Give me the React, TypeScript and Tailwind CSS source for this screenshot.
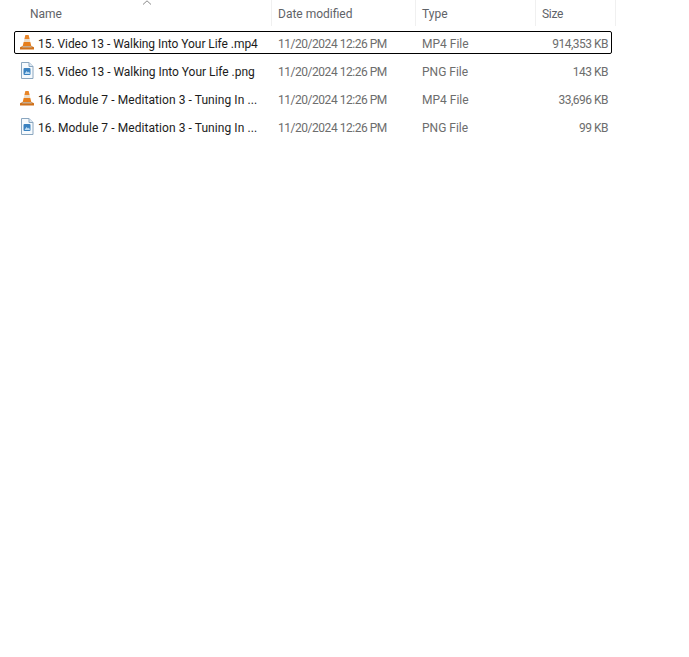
const files = [
  { name: "15. Video 13 - Walking Into Your Life .mp4", type: "MP4 File", size: "914,353 KB", kind: "vlc", selected: true, spacing: "tracking-[-0.05px]" },
  { name: "15. Video 13 - Walking Into Your Life .png", type: "PNG File", size: "143 KB", kind: "png", spacing: "tracking-[-0.03px]" },
  { name: "16. Module 7 - Meditation 3 - Tuning In ...", type: "MP4 File", size: "33,696 KB", kind: "vlc", spacing: "tracking-[0.07px]" },
  { name: "16. Module 7 - Meditation 3 - Tuning In ...", type: "PNG File", size: "99 KB", kind: "png", spacing: "tracking-[0.07px]" },
];

const VlcIcon = () => (
  <svg width="16" height="17" viewBox="0 0 16 17" className="shrink-0">
    <path d="M6.400 1h3.200l1 4H5.400z" fill="#e8862a" />
    <path d="M5.400 5h5.200l.7 3H4.700z" fill="#e9dccb" />
    <path d="M4.700 8h6.600l1 4H3.700z" fill="#e67e1c" />
    <path d="M1 13.200 3.600 12h8.800l2.600 1.200V15.600H1z" fill="#d0711a" />
    <path d="M3.600 12h8.800l.6 1.600H3z" fill="#c4ab90" />
  </svg>
);

const PngIcon = () => (
  <svg width="14" height="17" viewBox="0 0 14 17" className="shrink-0">
    <path d="M1.500.5h7.500l4 4v12h-11.500z" fill="#f6fafd" stroke="#8aa6bf" />
    <path d="M9 .5v4h4" fill="#dce8f2" stroke="#8aa6bf" />
    <rect x="3.500" y="6" width="7" height="7" rx="1" fill="#3a82c0" />
    <path d="M4.500 12l2-3 1.500 1.500 1-1 1 2.500z" fill="#bcdcf4" />
  </svg>
);

const SortChevron = () => (
  <svg width="10" height="6" viewBox="0 0 10 6" className="absolute left-[142px] top-0">
    <path d="M1 4.500 5 .8l4 3.700" fill="none" stroke="#8a8a8a" strokeWidth="1" />
  </svg>
);

export default function App() {
  return (
    <div className="relative min-h-[657px] w-[689px] bg-white font-['Roboto',sans-serif] text-[12px]">
      <SortChevron />
      <div className="flex h-[26px] text-[#5f6368]">
        <div className="w-[272px] border-r border-[#f0f0f0] pl-[30px] pt-[5px]">Name</div>
        <div className="w-[144px] border-r border-[#f0f0f0] pl-[6px] pt-[5px]">Date modified</div>
        <div className="w-[120px] border-r border-[#f0f0f0] pl-[6px] pt-[5px]">Type</div>
        <div className="w-[80px] border-r border-[#f0f0f0] pl-[6px] pt-[5px] tracking-[-0.3px]">Size</div>
      </div>
      <div className="ml-[14px] mt-[5px] flex w-[598px] flex-col gap-[5px]">
        {files.map((file, i) => (
          <div
            key={i}
            className={`flex h-[23px] items-center rounded-[2px] border pt-[2px] ${file.selected ? "border-black" : "border-transparent"}`}
          >
            <div className="flex w-[257px] items-center">
              <div className="-mt-[2px] flex w-[23px] justify-center pl-[1px]">
                {file.kind === "vlc" ? <VlcIcon /> : <PngIcon />}
              </div>
              <span className={`whitespace-nowrap text-[#1c1c1c] ${file.spacing}`}>{file.name}</span>
            </div>
            <div className="w-[144px] pl-[6px] tracking-[-0.47px] text-[#6d6d6d]">11/20/2024 12:26 PM</div>
            <div className="w-[120px] pl-[6px] text-[#6d6d6d]">{file.type}</div>
            <div className="w-[72px] text-right tracking-[-0.5px] text-[#6d6d6d]">{file.size}</div>
          </div>
        ))}
      </div>
    </div>
  );
}
